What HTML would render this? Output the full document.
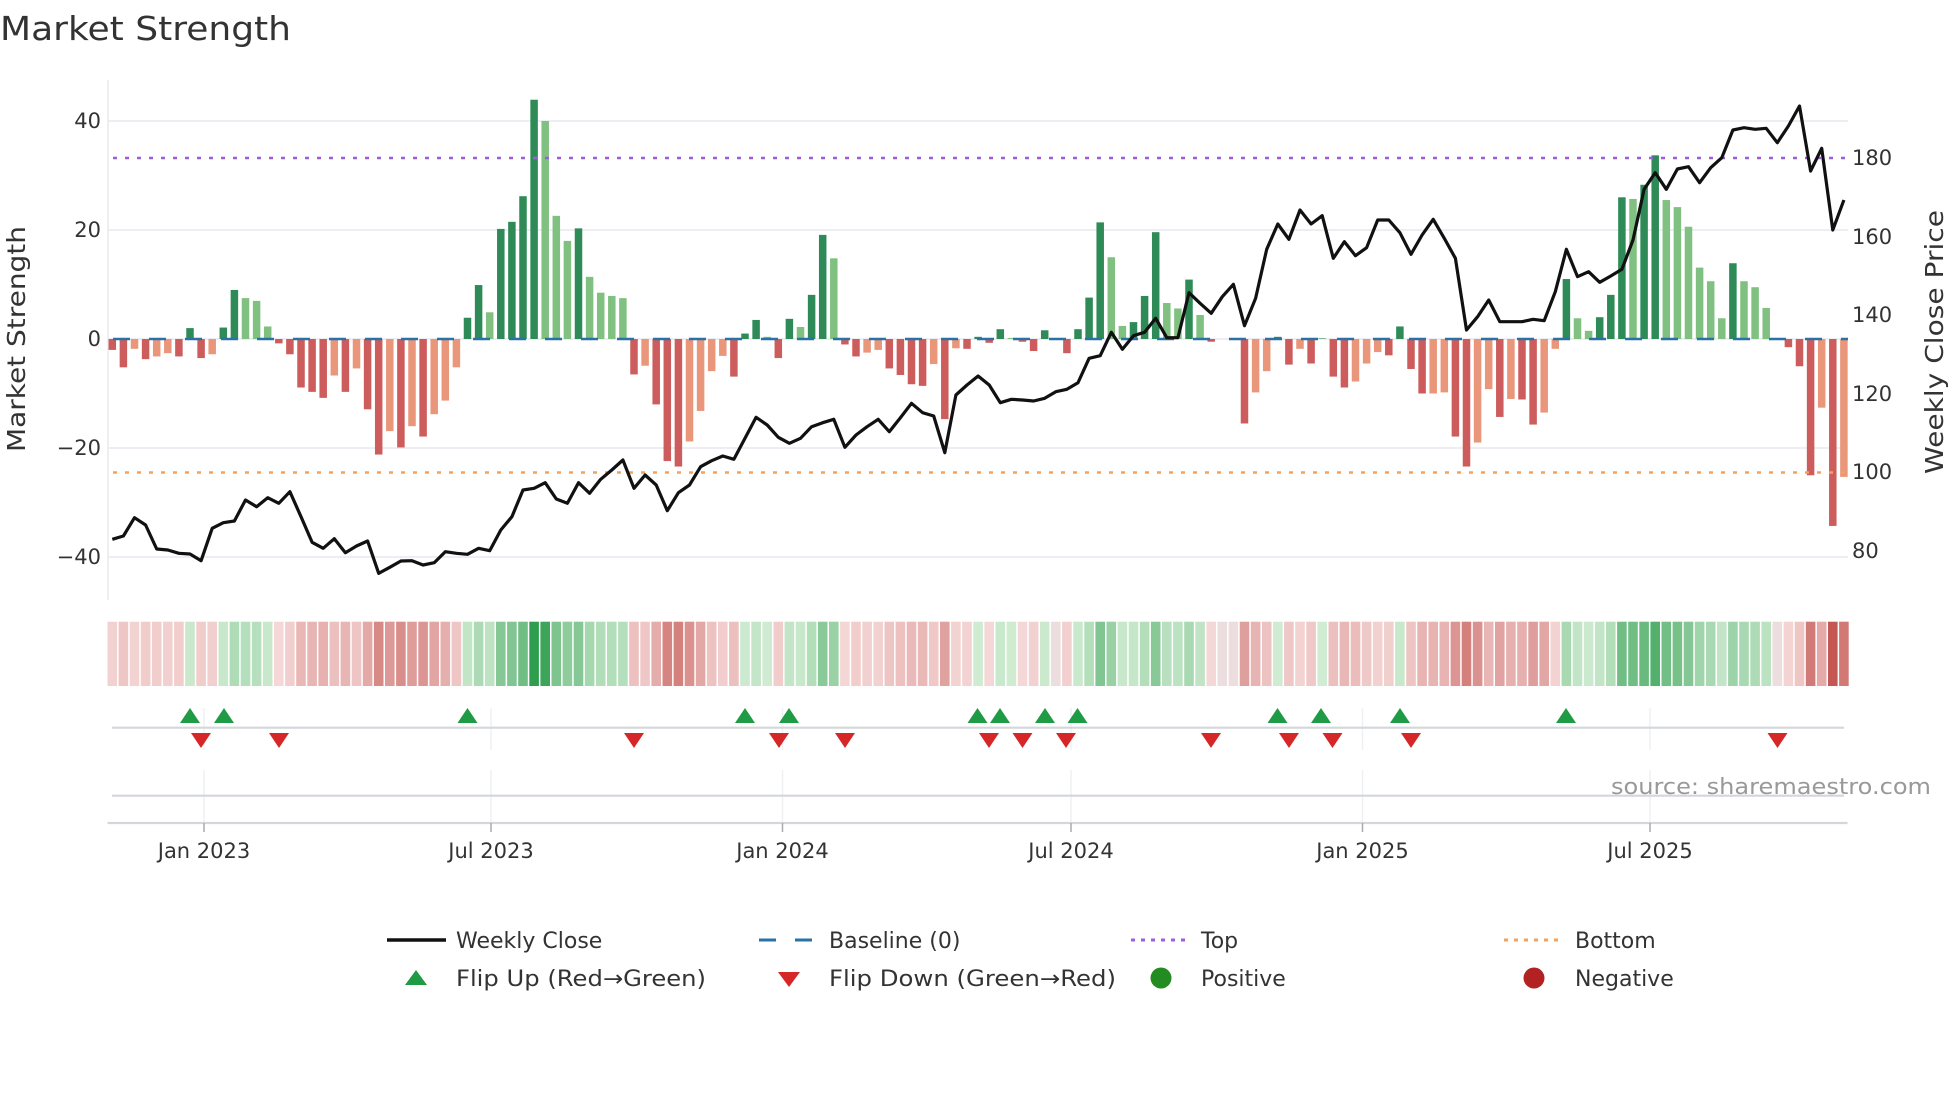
<!DOCTYPE html>
<html><head><meta charset="utf-8"><style>
html,body{margin:0;padding:0;background:#fff;}
svg{display:block;font-family:"DejaVu Sans","Liberation Sans",sans-serif;}
</style></head><body>
<svg id="s" width="1960" height="1102" viewBox="0 0 1960 1102" xmlns="http://www.w3.org/2000/svg">
<rect width="1960" height="1102" fill="#fff"/>
<text x="0" y="40" font-size="33" fill="#333" textLength="291" lengthAdjust="spacingAndGlyphs">Market Strength</text>
<g stroke="#eceef3" stroke-width="2">
<line x1="108" y1="121" x2="1848" y2="121"/><line x1="108" y1="230" x2="1848" y2="230"/>
<line x1="108" y1="339" x2="1848" y2="339"/><line x1="108" y1="448" x2="1848" y2="448"/>
<line x1="108" y1="557" x2="1848" y2="557"/>
</g>
<line x1="108" y1="80" x2="108" y2="600" stroke="#e8eaee" stroke-width="1.5"/>
<g font-size="21" fill="#333" text-anchor="end">
<text x="101" y="128">40</text><text x="101" y="237">20</text><text x="101" y="346">0</text>
<text x="101" y="455">−20</text><text x="101" y="564">−40</text>
</g>
<g font-size="21" fill="#333">
<text x="1852" y="165">180</text><text x="1852" y="244">160</text><text x="1852" y="322">140</text>
<text x="1852" y="401">120</text><text x="1852" y="479">100</text><text x="1852" y="558">80</text>
</g>
<text transform="translate(25,339) rotate(-90)" font-size="25" fill="#333" text-anchor="middle" textLength="226" lengthAdjust="spacingAndGlyphs">Market Strength</text>
<text transform="translate(1943,342) rotate(-90)" font-size="25" fill="#333" text-anchor="middle" textLength="264" lengthAdjust="spacingAndGlyphs">Weekly Close Price</text>
<g id="bars"></g>
<line x1="113" y1="158" x2="1848" y2="158" stroke="#9b5fd9" stroke-width="2.6" stroke-dasharray="4 8"/>
<line x1="113" y1="472.5" x2="1848" y2="472.5" stroke="#f2a25f" stroke-width="2.6" stroke-dasharray="4 8"/>
<line x1="113" y1="339" x2="1848" y2="339" stroke="#2a71a6" stroke-width="2.6" stroke-dasharray="17 19"/>
<polyline id="pl" fill="none" stroke="#111" stroke-width="3.2" stroke-linejoin="round"/>
<g id="strip"></g>
<g stroke="#eef0f3" stroke-width="1.5">
<line x1="204" y1="708" x2="204" y2="750"/><line x1="491" y1="708" x2="491" y2="750"/>
<line x1="782.5" y1="708" x2="782.5" y2="750"/><line x1="1071" y1="708" x2="1071" y2="750"/>
<line x1="1362.5" y1="708" x2="1362.5" y2="750"/><line x1="1650" y1="708" x2="1650" y2="750"/>
<line x1="204" y1="770" x2="204" y2="823"/><line x1="491" y1="770" x2="491" y2="823"/>
<line x1="782.5" y1="770" x2="782.5" y2="823"/><line x1="1071" y1="770" x2="1071" y2="823"/>
<line x1="1362.5" y1="770" x2="1362.5" y2="823"/><line x1="1650" y1="770" x2="1650" y2="823"/>
</g>
<line x1="112" y1="727.7" x2="1844" y2="727.7" stroke="#d3d6da" stroke-width="2.2"/>
<g id="tri"></g>
<line x1="112" y1="795.7" x2="1844" y2="795.7" stroke="#d3d6da" stroke-width="2.2"/>
<line x1="107.5" y1="823" x2="1847.5" y2="823" stroke="#d3d6da" stroke-width="2.2"/>
<g stroke="#aaa" stroke-width="1.5">
<line x1="204" y1="823" x2="204" y2="832"/><line x1="491" y1="823" x2="491" y2="832"/>
<line x1="782.5" y1="823" x2="782.5" y2="832"/><line x1="1071" y1="823" x2="1071" y2="832"/>
<line x1="1362.5" y1="823" x2="1362.5" y2="832"/><line x1="1650" y1="823" x2="1650" y2="832"/>
</g>
<g font-size="21" fill="#333" text-anchor="middle">
<text x="204" y="858">Jan 2023</text><text x="491" y="858">Jul 2023</text>
<text x="782.5" y="858">Jan 2024</text><text x="1071" y="858">Jul 2024</text>
<text x="1362.5" y="858">Jan 2025</text><text x="1650" y="858">Jul 2025</text>
</g>
<text x="1931" y="794" font-size="22" fill="#999" text-anchor="end" textLength="320" lengthAdjust="spacingAndGlyphs">source: sharemaestro.com</text>
<!-- legend -->
<line x1="387" y1="940" x2="446" y2="940" stroke="#111" stroke-width="3.5"/>
<line x1="759" y1="940" x2="812" y2="940" stroke="#2a71a6" stroke-width="3" stroke-dasharray="17 19"/>
<line x1="1131" y1="940" x2="1185" y2="940" stroke="#9b5fd9" stroke-width="3" stroke-dasharray="4 6"/>
<line x1="1504" y1="940" x2="1559" y2="940" stroke="#f2a25f" stroke-width="3" stroke-dasharray="4 6"/>
<polygon points="416,970 427,985 405,985" fill="#1f9a45"/>
<polygon points="778,972 800,972 789,987" fill="#d62728"/>
<circle cx="1161" cy="978" r="10.5" fill="#228b22"/>
<circle cx="1534" cy="978" r="10.5" fill="#b22222"/>
<g font-size="22" fill="#333">
<text x="456" y="948">Weekly Close</text><text x="829" y="948">Baseline (0)</text>
<text x="1201" y="948">Top</text><text x="1575" y="948">Bottom</text>
<text x="456" y="986" textLength="250" lengthAdjust="spacingAndGlyphs">Flip Up (Red→Green)</text><text x="829" y="986" textLength="287" lengthAdjust="spacingAndGlyphs">Flip Down (Green→Red)</text>
<text x="1201" y="986">Positive</text><text x="1575" y="986">Negative</text>
</g>
</svg>
<script>
var V=[-2,-5.2,-1.8,-3.7,-3.2,-2.6,-3.2,2,-3.5,-2.8,2.1,9,7.5,7,2.3,-0.8,-2.8,-8.9,-9.7,-10.8,-6.7,-9.7,-5.4,-12.9,-21.2,-16.9,-19.9,-16,-17.9,-13.8,-11.3,-5.2,3.9,9.9,4.9,20.2,21.5,26.2,43.9,40,22.6,18,20.3,11.4,8.5,7.9,7.5,-6.5,-4.9,-12,-22.4,-23.4,-18.8,-13.2,-5.9,-3.1,-6.9,1,3.5,0.4,-3.5,3.7,2.2,8.1,19.1,14.8,-1,-3.2,-2.5,-2,-5.4,-6.6,-8.3,-8.6,-4.6,-14.7,-1.7,-1.8,0.4,-0.7,1.8,0.2,-0.5,-2.2,1.6,0,-2.6,1.8,7.6,21.4,15,2.4,3.1,7.9,19.6,6.6,5.6,10.9,4.4,-0.5,0,0,-15.5,-9.8,-5.9,0.4,-4.7,-1.8,-4.5,0.1,-6.9,-8.9,-7.8,-4.5,-2.4,-3,2.3,-5.5,-10,-10,-9.8,-17.9,-23.4,-19,-9.2,-14.3,-11,-11.1,-15.7,-13.5,-1.8,11,3.8,1.5,4,8.1,26,25.7,28.3,33.7,25.5,24.2,20.6,13.1,10.6,3.8,13.9,10.6,9.5,5.7,0,-1.5,-5,-25,-12.6,-34.3,-25.3];
var Y=[539.3,536,517.7,525,549,550,553.3,554,560.7,528.3,522.7,521,500,506.7,497.7,503.3,491.7,516.7,542.3,548.3,538.7,552.7,546,541,573.3,567.3,561,560.7,565,562.7,551.7,553.3,554.3,548.3,550.7,530,516.7,490,488.3,482.7,499,503.3,482.7,493.3,479.3,470,460,488.3,475,485,510.7,492.7,485,466.7,460.7,456,459.3,438.3,417.3,425,437.3,443.3,438.3,426.7,422.7,419.3,447.3,435,426.7,419.3,431.7,417.7,403.3,412.7,416,452.7,395,385,376,385,402.7,399.3,400,401,398.3,391.7,389.3,382.7,358.3,355.7,332.3,349.3,335.7,332.3,318.3,337.7,337.7,292.7,303.3,313.3,296.7,284.3,325.7,298.3,249.3,224,239.3,210,224,215.7,258.3,241.7,255.7,247.7,220,220,232.7,254.3,235,219.3,238.3,258.3,330,316.7,300,321.7,321.7,321.7,319.3,320.7,291.7,249.3,276.7,271.7,282.3,276,269.3,240,189.3,172.7,189.3,169,166.7,182.7,167.7,157.7,130,127.7,129.3,128.3,142.7,126,106,171,148.3,230,200];
var NS="http://www.w3.org/2000/svg";
function el(t,a,p){var e=document.createElementNS(NS,t);for(var k in a)e.setAttribute(k,a[k]);p.appendChild(e);return e;}
function mix(a,b,t){return "rgb("+[0,1,2].map(function(i){return Math.round(a[i]+(b[i]-a[i])*t)}).join(",")+")";}
var bars=document.getElementById("bars"),strip=document.getElementById("strip"),pts=[];
for(var i=0;i<V.length;i++){
 var x=112.3+11.1*i,v=V[i],p=i?V[i-1]:0;
 var dark=(i==0)||(v*p<=0)||Math.abs(v)>Math.abs(p);
 if(v!=0){
  var h=Math.abs(v)*5.45,c=v>0?(dark?"#2e8b57":"#80c080"):(dark?"#cd5c5c":"#e9967a");
  el("rect",{x:x-3.75,y:v>0?339-h:339,width:7.5,height:h,fill:c},bars);
 }
 var col;
 if(v<0)col=mix([245,218,217],[196,84,80],Math.min(-v/35,1));
 else if(v>0)col=mix([208,236,210],[46,158,78],Math.min(v/44,1));
 else col="#ecdede";
 el("rect",{x:x-4.8,y:621.7,width:9.6,height:64.3,fill:col},strip);
 pts.push(x.toFixed(1)+","+Y[i]);
}
document.getElementById("pl").setAttribute("points",pts.join(" "));
var tri=document.getElementById("tri");
[190,224,467.5,745,789,977.5,1000,1045,1077.5,1277.5,1321,1400,1566].forEach(function(x){
 el("polygon",{points:(x)+",708 "+(x+10)+",723 "+(x-10)+",723",fill:"#1f9a45"},tri);});
[201,279,634,779,845,989,1022.5,1066,1211,1289,1332.5,1411,1777.5].forEach(function(x){
 el("polygon",{points:(x-10)+",733 "+(x+10)+",733 "+x+",748",fill:"#d62728"},tri);});
</script>
</body></html>
